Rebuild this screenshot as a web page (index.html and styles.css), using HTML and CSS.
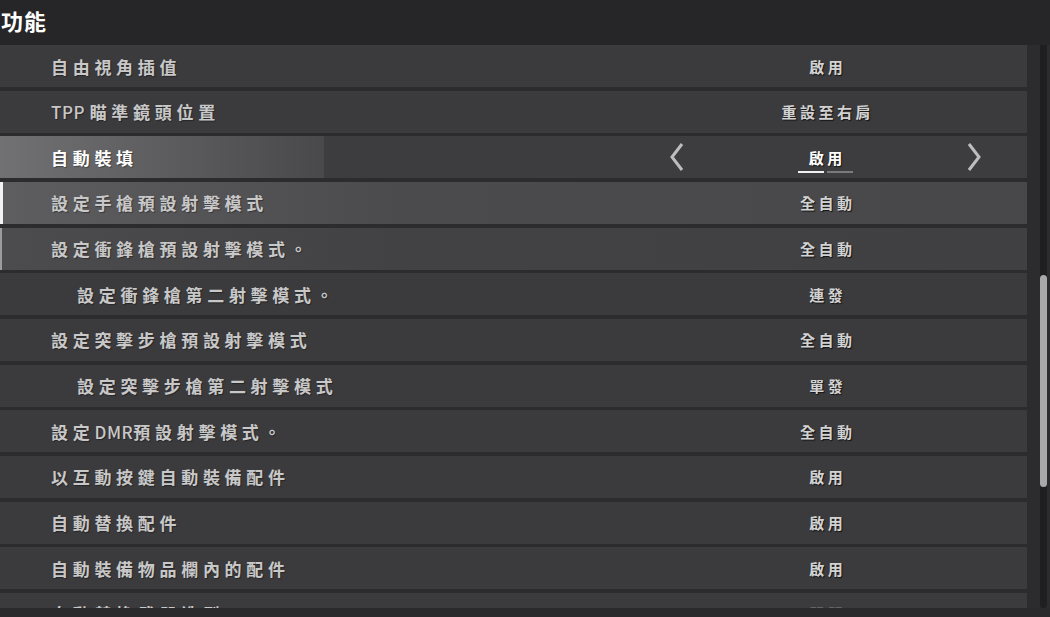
FILE: index.html
```html
<!DOCTYPE html>
<html lang="zh-Hant">
<head>
<meta charset="UTF-8">
<meta name="viewport" content="width=device-width, initial-scale=1.0">
<title>功能</title>
<link rel="stylesheet" href="styles.css">
</head>
<body>

<div class="header">功能</div>

<div class="main">
  <div class="list">
    <div class="row">
      <div class="label">自由視角插值</div>
      <div class="value"><span class="value-text">啟用</span></div>
    </div>
    <div class="row">
      <div class="label"><span class="latin">TPP </span>瞄準鏡頭位置</div>
      <div class="value"><span class="value-text">重設至右肩</span></div>
    </div>
    <div class="row focus">
      <div class="label">自動裝填</div>
      <div class="value spinner">
        <svg class="arrow" width="16" height="30" viewBox="0 0 16 30"><path d="M13 2 L3 15 L13 28" fill="none" stroke="#bdbdbd" stroke-width="3"/></svg>
        <span class="value-text">啟用
          <span class="pips"><i class="on"></i><i></i></span>
        </span>
        <svg class="arrow" width="16" height="30" viewBox="0 0 16 30"><path d="M3 2 L13 15 L3 28" fill="none" stroke="#bdbdbd" stroke-width="3"/></svg>
      </div>
    </div>
    <div class="row hover">
      <div class="label">設定手槍預設射擊模式</div>
      <div class="value"><span class="value-text">全自動</span></div>
    </div>
    <div class="row near">
      <div class="label">設定衝鋒槍預設射擊模式。</div>
      <div class="value"><span class="value-text">全自動</span></div>
    </div>
    <div class="row sub">
      <div class="label">設定衝鋒槍第二射擊模式。</div>
      <div class="value"><span class="value-text">連發</span></div>
    </div>
    <div class="row">
      <div class="label">設定突擊步槍預設射擊模式</div>
      <div class="value"><span class="value-text">全自動</span></div>
    </div>
    <div class="row sub">
      <div class="label">設定突擊步槍第二射擊模式</div>
      <div class="value"><span class="value-text">單發</span></div>
    </div>
    <div class="row">
      <div class="label">設定<span class="latin">DMR</span>預設射擊模式。</div>
      <div class="value"><span class="value-text">全自動</span></div>
    </div>
    <div class="row">
      <div class="label">以互動按鍵自動裝備配件</div>
      <div class="value"><span class="value-text">啟用</span></div>
    </div>
    <div class="row">
      <div class="label">自動替換配件</div>
      <div class="value"><span class="value-text">啟用</span></div>
    </div>
    <div class="row">
      <div class="label">自動裝備物品欄內的配件</div>
      <div class="value"><span class="value-text">啟用</span></div>
    </div>
    <div class="row">
      <div class="label">自動替換武器造型</div>
      <div class="value"><span class="value-text">關閉</span></div>
    </div>
  </div>
  <div class="gutter">
    <div class="track"><div class="thumb"></div></div>
  </div>
</div>

<div class="footer"></div>

</body>
</html>
```

FILE: styles.css
```css
body {
  margin: 0;
  background-color: #2c2b2e;
  font-family: 'Noto Sans CJK TC', 'Noto Sans', sans-serif;
  color: #c8c8c8;
  overflow: hidden;
}
.header {
  height: 45px;
  line-height: 40px;
  padding-left: 1px;
  background-color: #262528;
  color: #fff;
  font-size: 22px;
  font-weight: 700;
  letter-spacing: 1px;
}
.main {
  display: flex;
  height: 563px;
}
.list {
  width: 1027px;
  height: 563px;
  overflow: hidden;
  display: flex;
  flex-direction: column;
  gap: 3.67px;
}
.gutter {
  flex: 1;
  padding-left: 13px;
}
.track {
  width: 7px;
  height: 563px;
  border-radius: 0 0 4px 4px;
  background-color: #1f1e21;
  padding-top: 230px;
  box-sizing: border-box;
}
.thumb {
  width: 7px;
  height: 212px;
  border-radius: 4px;
  background-color: #a9a9a9;
}
.footer {
  height: 9px;
  background-color: #2a292c;
}
.row {
  flex: 0 0 42px;
  display: grid;
  grid-template-columns: 1fr 402px;
  align-items: center;
  background-color: #3b3a3d;
}
.row.focus {
  background: linear-gradient(to right, #717173 0, #49494b 324px, #3d3c3f 324px);
}
.row.hover {
  background: linear-gradient(to right, #5e5e60 0, #4b4a4d 400px, #48474a 100%);
  box-shadow: inset 3px 0 0 #f2f2f2;
}
.row.near {
  background: linear-gradient(to right, #4c4c4e 0, #424144 400px, #403f42 100%);
  box-shadow: inset 2px 0 0 #9c9c9c;
}
.label {
  padding-left: 51px;
  font-size: 17px;
  font-weight: 700;
  letter-spacing: 4.7px;
  white-space: nowrap;
  text-shadow: 1px 1px 1px rgba(0, 0, 0, 0.35);
}
.label .latin {
  letter-spacing: 0.6px;
  font-weight: 500;
}
.row.sub .label {
  padding-left: 77px;
}
.row.focus .label {
  color: #fff;
}
.value {
  display: flex;
  justify-content: center;
  align-items: center;
}
.value.spinner {
  justify-content: space-between;
  padding: 0 45px 0 44px;
}
.value-text {
  position: relative;
  font-size: 15px;
  font-weight: 700;
  letter-spacing: 3.5px;
  padding-left: 3.5px;
  color: #d2d2d2;
  text-shadow: 1px 1px 1px #141414;
}
.row.focus .value-text {
  color: #fff;
}
.pips {
  position: absolute;
  left: 50%;
  top: 100%;
  margin-left: -27px;
  margin-top: 3px;
  display: flex;
  gap: 3px;
}
.pips i {
  display: block;
  width: 26px;
  height: 2px;
  background-color: #7a7a7c;
}
.pips i.on {
  background-color: #f0f0f0;
}
.arrow {
  display: block;
}
```
